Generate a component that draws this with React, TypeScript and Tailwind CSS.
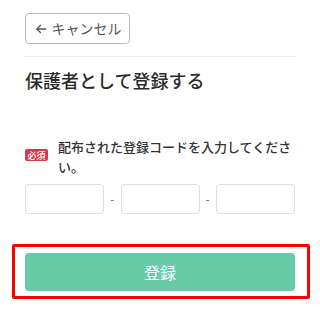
export default function App() {
  return (
    <div
      className="min-h-[314px] w-[320px] bg-white px-[25px] pt-[13px] text-[#333]"
      style={{ fontFamily: '"Noto Sans CJK JP", "Noto Sans", sans-serif' }}
    >
      <button
        type="button"
        className="flex h-[31px] w-[105px] items-center justify-center gap-[4px] rounded-[4px] border border-[#b8b8b8] text-[14px] text-[#555]"
      >
        <svg width="14" height="14" viewBox="0 0 24 24" fill="none" stroke="currentColor" strokeWidth="2.2" strokeLinecap="round" strokeLinejoin="round">
          <path d="M20 12H5" />
          <path d="M11 6l-6 6 6 6" />
        </svg>
        キャンセル
      </button>

      <div className="mt-[12px] border-t border-[#eeeeee]" />

      <h1 className="mt-[10px] text-[18px] font-medium leading-[26px] text-[#2b2b2b]">保護者として登録する</h1>

      <div className="mt-[44px] flex items-start">
        <span className="mt-[12px] flex h-[12px] w-[23px] shrink-0 items-center justify-center rounded-[2px] bg-[#d63a4a] text-[9px] font-medium leading-none text-white">
          必須
        </span>
        <p className="ml-[10px] text-[13px] font-medium leading-[20px] text-[#333]">
          配布された登録コードを入力してください。
        </p>
      </div>

      <div className="mt-[7px] flex items-center">
        <input className="h-[30px] w-[79px] rounded-[4px] border border-[#dddddd] outline-none" />
        <span className="flex-1 text-center text-[11px] text-[#555]">-</span>
        <input className="h-[30px] w-[79px] rounded-[4px] border border-[#dddddd] outline-none" />
        <span className="flex-1 text-center text-[11px] text-[#555]">-</span>
        <input className="h-[30px] w-[79px] rounded-[4px] border border-[#dddddd] outline-none" />
      </div>

      <div className="mt-[30px] ml-[-13px] mr-[-15px] rounded-[2px] border-[3px] border-[#ff0000] pb-[5px] pl-[10px] pr-[12px] pt-[6px]">
        <button
          type="button"
          className="flex h-[38px] w-full items-center justify-center rounded-[4px] bg-[#67cba8] text-[16px] text-white"
        >
          登録
        </button>
      </div>
    </div>
  );
}
